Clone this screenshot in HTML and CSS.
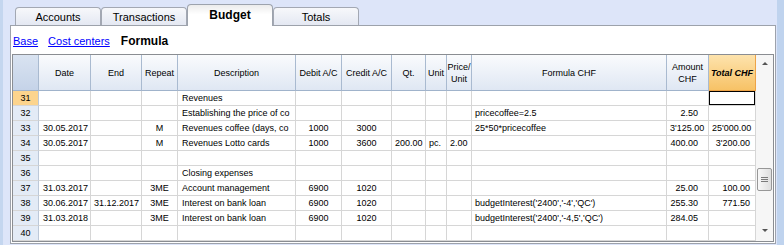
FILE: index.html
```html
<!DOCTYPE html>
<html lang="en">
<head>
    <meta charset="UTF-8">
    <title>Budget - Formula</title>
    <link rel="stylesheet" href="styles.css">
</head>
<body>
    <div class="app">
        <div class="edge-left"></div>
        <main class="main">
            <nav class="tabs">
                <div class="tab">Accounts</div>
                <div class="tab">Transactions</div>
                <div class="tab active">Budget</div>
                <div class="tab">Totals</div>
            </nav>
            <section class="panel">
                <div class="views">
                    <a href="#">Base</a>
                    <a href="#">Cost centers</a>
                    <span class="current">Formula</span>
                </div>
                <div class="grid-box">
                    <div class="sheet">
                        <!-- header -->
                        <div class="hd corner"></div>
                        <div class="hd">Date</div>
                        <div class="hd">End</div>
                        <div class="hd">Repeat</div>
                        <div class="hd">Description</div>
                        <div class="hd">Debit A/C</div>
                        <div class="hd">Credit A/C</div>
                        <div class="hd">Qt.</div>
                        <div class="hd">Unit</div>
                        <div class="hd">Price/<br>Unit</div>
                        <div class="hd">Formula CHF</div>
                        <div class="hd">Amount<br>CHF</div>
                        <div class="hd total-hd">Total CHF</div>

                        <!-- 31 -->
                        <div class="cur">31</div><div></div><div></div><div></div>
                        <div>Revenues</div><div></div><div></div><div></div><div></div><div></div>
                        <div></div><div></div><div class="focus"></div>
                        <!-- 32 -->
                        <div>32</div><div></div><div></div><div></div>
                        <div>Establishing the price of co</div><div></div><div></div><div></div><div></div><div></div>
                        <div>pricecoffee=2.5</div><div>2.50</div><div></div>
                        <!-- 33 -->
                        <div>33</div><div>30.05.2017</div><div></div><div>M</div>
                        <div>Revenues coffee (days, co</div><div>1000</div><div>3000</div><div></div><div></div><div></div>
                        <div>25*50*pricecoffee</div><div>3'125.00</div><div>25'000.00</div>
                        <!-- 34 -->
                        <div>34</div><div>30.05.2017</div><div></div><div>M</div>
                        <div>Revenues Lotto cards</div><div>1000</div><div>3600</div><div>200.00</div><div>pc.</div><div>2.00</div>
                        <div></div><div>400.00</div><div>3'200.00</div>
                        <!-- 35 -->
                        <div>35</div><div></div><div></div><div></div>
                        <div></div><div></div><div></div><div></div><div></div><div></div>
                        <div></div><div></div><div></div>
                        <!-- 36 -->
                        <div>36</div><div></div><div></div><div></div>
                        <div>Closing expenses</div><div></div><div></div><div></div><div></div><div></div>
                        <div></div><div></div><div></div>
                        <!-- 37 -->
                        <div>37</div><div>31.03.2017</div><div></div><div>3ME</div>
                        <div>Account management</div><div>6900</div><div>1020</div><div></div><div></div><div></div>
                        <div></div><div>25.00</div><div>100.00</div>
                        <!-- 38 -->
                        <div>38</div><div>30.06.2017</div><div>31.12.2017</div><div>3ME</div>
                        <div>Interest on bank loan</div><div>6900</div><div>1020</div><div></div><div></div><div></div>
                        <div>budgetInterest('2400','-4','QC')</div><div>255.30</div><div>771.50</div>
                        <!-- 39 -->
                        <div>39</div><div>31.03.2018</div><div></div><div>3ME</div>
                        <div>Interest on bank loan</div><div>6900</div><div>1020</div><div></div><div></div><div></div>
                        <div>budgetInterest('2400','-4,5','QC')</div><div>284.05</div><div></div>
                        <!-- 40 -->
                        <div>40</div><div></div><div></div><div></div>
                        <div></div><div></div><div></div><div></div><div></div><div></div>
                        <div></div><div></div><div></div>
                    </div>
                    <div class="scrollbar">
                        <div class="arrow-up"></div>
                        <div class="thumb"><div class="grip"></div></div>
                        <div class="arrow-down"></div>
                    </div>
                </div>
            </section>
        </main>
        <div class="edge-right"></div>
    </div>
</body>
</html>
```

FILE: styles.css
```css
/* Global */
* {
    margin: 0;
    padding: 0;
    box-sizing: border-box;
}

body {
    font-family: 'Liberation Sans', Arial, sans-serif;
    font-size: 11px;
    color: #000;
    background-color: #dde5f9;
    width: 784px;
    height: 245px;
    overflow: hidden;
}

.app {
    display: flex;
    height: 245px;
}

.edge-left {
    width: 3px;
    background-color: #c4d6ef;
}

.edge-right {
    width: 7px;
    margin-left: 1px;
    background-color: #bfd3ee;
}

.main {
    width: 773px;
    padding-left: 7px;
    display: flex;
    flex-direction: column;
}

/* Tabs */
.tabs {
    height: 25px;
    display: flex;
    align-items: flex-end;
    padding-left: 5px;
}

.tab {
    width: 86px;
    height: 18px;
    display: flex;
    align-items: center;
    justify-content: center;
    border: 1px solid #a3a8b3;
    border-bottom: none;
    border-radius: 4px 4px 0 0;
    background: linear-gradient(#f7f8fb, #e4e8f2);
}

.tab.active {
    height: 22px;
    margin-bottom: -1px;
    position: relative;
    z-index: 1;
    font-weight: bold;
    font-size: 12px;
    padding-bottom: 2px;
    border-color: #9da3ad;
    background: linear-gradient(#ececec, #fff 45%);
}

/* Panel */
.panel {
    width: 766px;
    height: 219px;
    border: 1px solid #9da2ab;
    background-color: #fff;
    padding: 0 1px;
}

.views {
    height: 28px;
    display: flex;
    align-items: center;
    gap: 10px;
    padding: 2px 0 0 1px;
}

.views a {
    color: #0000ff;
}

.views .current {
    font-weight: bold;
    font-size: 12px;
    margin-left: 1px;
}

/* Grid */
.grid-box {
    display: flex;
    border: 1px solid #8a8d92;
    height: 188px;
}

.sheet {
    display: grid;
    grid-template-columns: 26px 52px 51px 36px 118px 46px 50px 34px 21px 25px 195px 42px 47px;
    grid-template-rows: 36px;
    grid-auto-rows: 15px;
    font-size: 9px;
}

.sheet > div {
    border-right: 1px solid #d6d6d6;
    border-bottom: 1px solid #d6d6d6;
    padding: 0 3px;
    line-height: 14px;
    white-space: nowrap;
    overflow: hidden;
}

/* column alignment */
.sheet > div:nth-child(13n+1) {
    text-align: center;
    background-color: #e3ebf6;
    border-right-color: #bcc8d8;
}

.sheet > div:nth-child(13n+2),
.sheet > div:nth-child(13n+5) {
    padding-left: 4px;
}

.sheet > div:nth-child(13n+4),
.sheet > div:nth-child(13n+6),
.sheet > div:nth-child(13n+7) {
    text-align: center;
}

.sheet > div:nth-child(13n+8),
.sheet > div:nth-child(13n) {
    text-align: right;
    padding-right: 5px;
}

.sheet > div:nth-child(13n+12) {
    text-align: right;
    padding-right: 10px;
}

.sheet > div.cur {
    background-color: #fcd48d;
}

.sheet > div.focus {
    box-shadow: inset 0 0 0 1px #000;
}

/* header */
.sheet > div.hd {
    display: flex;
    align-items: center;
    justify-content: center;
    text-align: center;
    white-space: normal;
    line-height: 12px;
    padding: 0;
    background: linear-gradient(#fafbfd, #dfe7f3);
    border-right-color: #a9bad0;
    border-bottom-color: #a0b3cb;
}

.sheet > div.corner {
    background: linear-gradient(#d9e3f1, #c5d3e8);
}

.sheet > div.total-hd {
    font-weight: bold;
    font-style: italic;
    background: linear-gradient(#fde3ad, #f7c266);
    border-right-color: #eda347;
    border-bottom-color: #eda347;
}

/* Scrollbar */
.scrollbar {
    width: 17px;
    background-color: #f6f6f6;
    display: flex;
    flex-direction: column;
    align-items: center;
}

.arrow-up {
    margin-top: 7px;
    border-left: 3px solid transparent;
    border-right: 3px solid transparent;
    border-bottom: 3px solid #555;
}

.arrow-down {
    margin-top: auto;
    margin-bottom: 9px;
    border-left: 3px solid transparent;
    border-right: 3px solid transparent;
    border-top: 3px solid #555;
}

.thumb {
    margin-top: 103px;
    width: 15px;
    height: 23px;
    border: 1px solid #979797;
    border-radius: 2px;
    background: linear-gradient(to right, #f8f8f8, #dedede);
    display: flex;
    align-items: center;
    justify-content: center;
}

.grip {
    width: 7px;
    height: 5px;
    background: repeating-linear-gradient(#7a7a7a 0 1px, transparent 1px 2px);
}
```
